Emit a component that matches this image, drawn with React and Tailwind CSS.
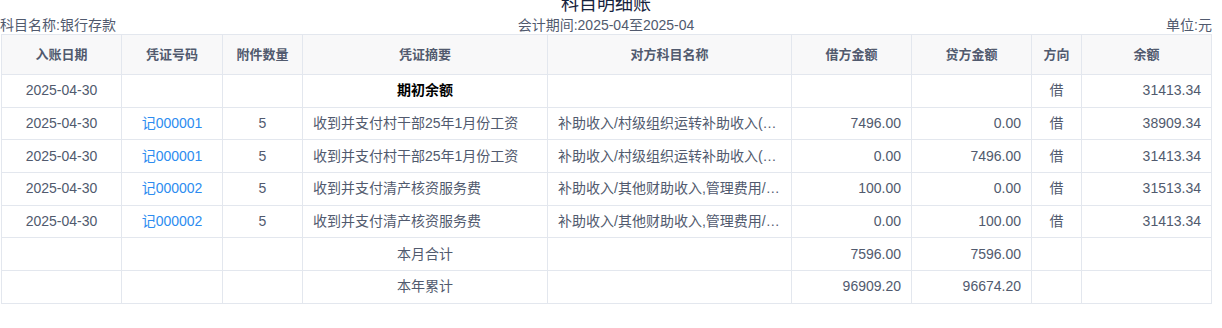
const COLS = [120, 101, 80, 245, 244, 120, 120, 50, 130]

const HEADERS = ['入账日期', '凭证号码', '附件数量', '凭证摘要', '对方科目名称', '借方金额', '贷方金额', '方向', '余额']

const ROWS = [
  { date: '2025-04-30', summary: '期初余额', opening: true, dir: '借', balance: '31413.34' },
  { date: '2025-04-30', voucher: '记000001', att: '5', summary: '收到并支付村干部25年1月份工资', account: '补助收入/村级组织运转补助收入(村干部报酬),应付工资', debit: '7496.00', credit: '0.00', dir: '借', balance: '38909.34' },
  { date: '2025-04-30', voucher: '记000001', att: '5', summary: '收到并支付村干部25年1月份工资', account: '补助收入/村级组织运转补助收入(村干部报酬),应付工资', debit: '0.00', credit: '7496.00', dir: '借', balance: '31413.34' },
  { date: '2025-04-30', voucher: '记000002', att: '5', summary: '收到并支付清产核资服务费', account: '补助收入/其他财助收入,管理费用/其他费用', debit: '100.00', credit: '0.00', dir: '借', balance: '31513.34' },
  { date: '2025-04-30', voucher: '记000002', att: '5', summary: '收到并支付清产核资服务费', account: '补助收入/其他财助收入,管理费用/其他费用', debit: '0.00', credit: '100.00', dir: '借', balance: '31413.34' },
  { summary: '本月合计', total: true, debit: '7596.00', credit: '7596.00' },
  { summary: '本年累计', total: true, debit: '96909.20', credit: '96674.20' },
]

const td = 'border border-[#e3e7ee] px-[10px] whitespace-nowrap overflow-hidden'

export default function App() {
  return (
    <div className="w-[1212px] text-[#515a6e] bg-white" style={{ fontFamily: '"Liberation Sans", "Noto Sans CJK SC", sans-serif' }}>
      <div className="-mt-[8px] text-center text-[18px] leading-[24px] text-[#17233d]">科目明细账</div>
      <div className="grid grid-cols-3 h-[18px] text-[14px] leading-[18px]">
        <span>科目名称:银行存款</span>
        <span className="text-center">会计期间:2025-04至2025-04</span>
        <span className="text-right">单位:元</span>
      </div>
      <table className="ml-px table-fixed border-collapse w-[1210px] text-[14px]">
        <colgroup>
          {COLS.map((w, i) => <col key={i} style={{ width: w }} />)}
        </colgroup>
        <thead>
          <tr className="h-[40px] bg-[#f8f8f9]">
            {HEADERS.map(h => (
              <th key={h} className={`${td} text-center text-[13px] font-bold text-[#515a6e]`}>{h}</th>
            ))}
          </tr>
        </thead>
        <tbody>
          {ROWS.map((r, i) => (
            <tr key={i} className="h-[32.7px]">
              <td className={`${td} text-center`}>{r.date}</td>
              <td className={`${td} text-center text-[#2d8cf0]`}>{r.voucher}</td>
              <td className={`${td} text-center`}>{r.att}</td>
              <td className={`${td} ${r.opening ? 'text-center font-bold text-black' : r.total ? 'text-center' : 'text-left'}`}>{r.summary}</td>
              <td className={`${td} text-left text-ellipsis`}>{r.account}</td>
              <td className={`${td} text-right`}>{r.debit}</td>
              <td className={`${td} text-right`}>{r.credit}</td>
              <td className={`${td} text-center`}>{r.dir}</td>
              <td className={`${td} text-right`}>{r.balance}</td>
            </tr>
          ))}
        </tbody>
      </table>
    </div>
  )
}
